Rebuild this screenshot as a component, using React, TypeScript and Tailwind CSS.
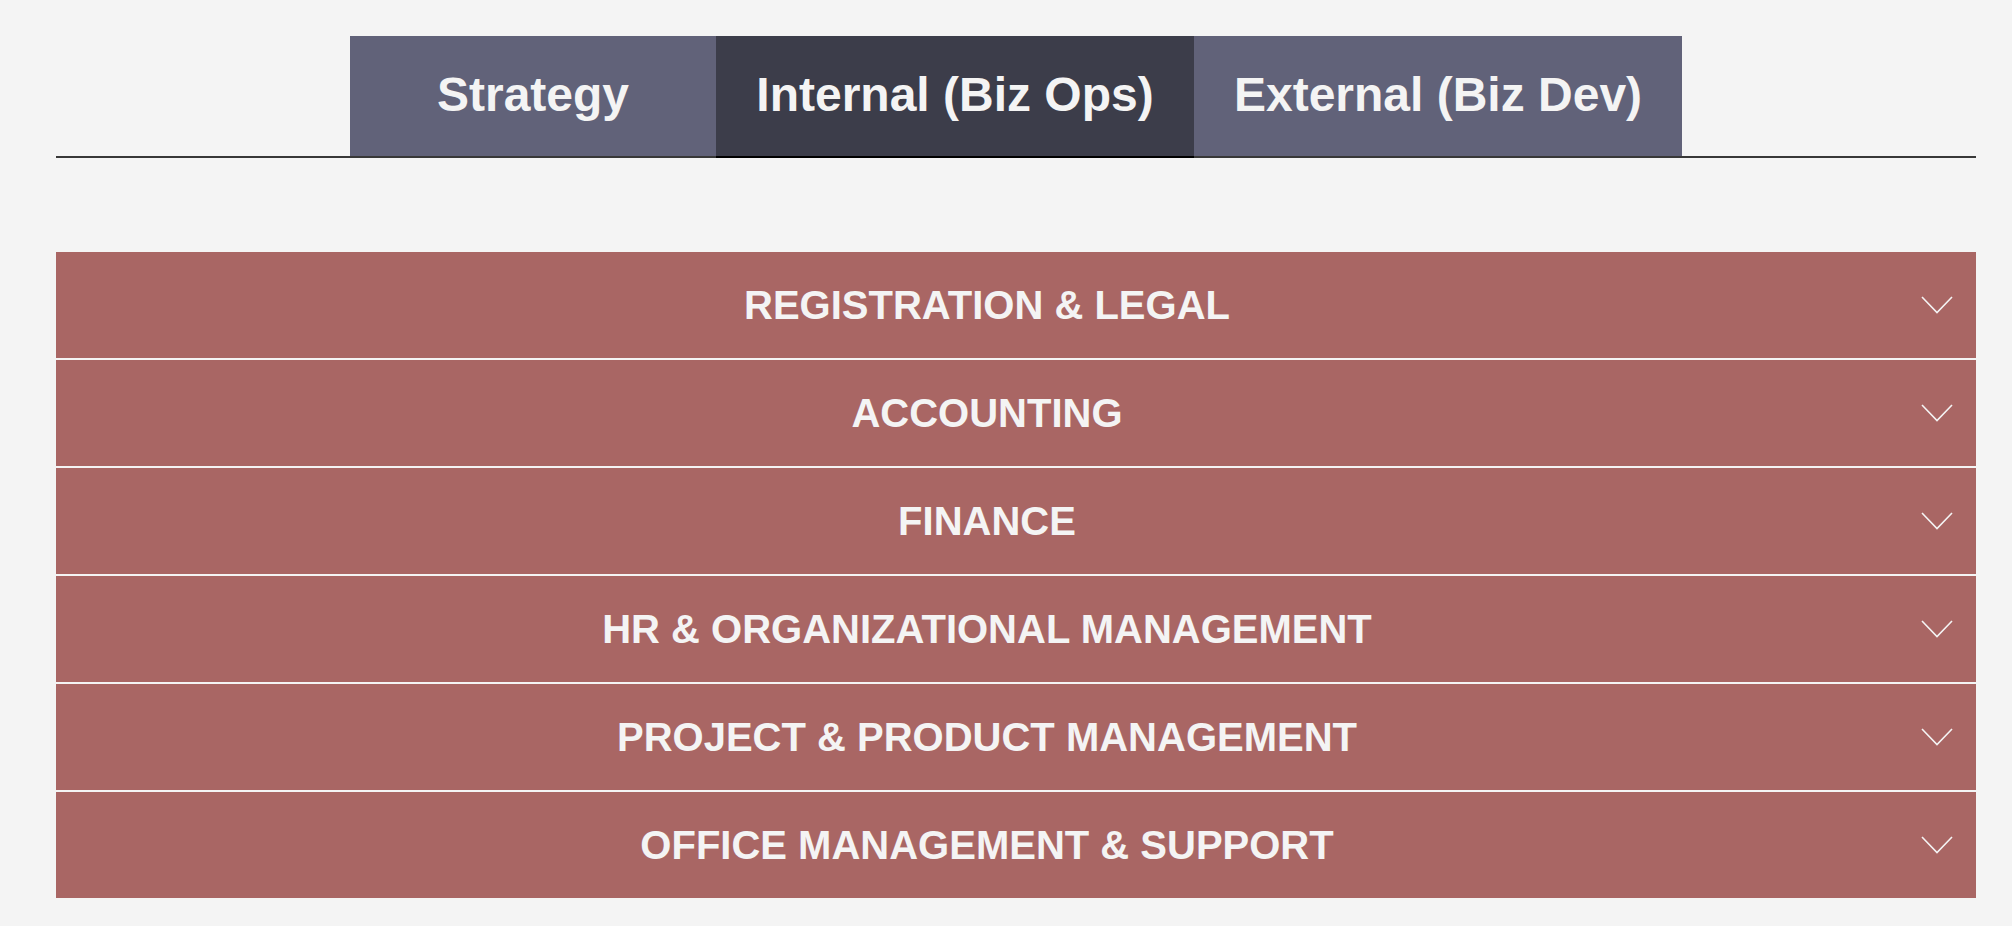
import React from "react";

const tabs = [
  { label: "Strategy", w: "w-[366px]", active: false },
  { label: "Internal (Biz Ops)", w: "w-[478px]", active: true },
  { label: "External (Biz Dev)", w: "w-[488px]", active: false },
];

const rows = [
  "REGISTRATION & LEGAL",
  "ACCOUNTING",
  "FINANCE",
  "HR & ORGANIZATIONAL MANAGEMENT",
  "PROJECT & PRODUCT MANAGEMENT",
  "OFFICE MANAGEMENT & SUPPORT",
];

function Chevron() {
  return (
    <svg width="32" height="18" viewBox="0 0 32 18" fill="none">
      <polyline points="1,1 16,16.5 31,1" stroke="#f4f4f4" strokeWidth="1.6" />
    </svg>
  );
}

export default function App() {
  return (
    <div
      className="min-h-[926px] w-full bg-[#f4f4f4] pt-[36px]"
      style={{ fontFamily: '"Liberation Sans", Arial, sans-serif' }}
    >
      <div className="ml-[56px] w-[1920px]">
        <div className="flex justify-center border-b-2 border-[#383838]">
          {tabs.map((t) => (
            <div
              key={t.label}
              className={`${t.w} -mb-[2px] flex h-[122px] items-center justify-center border-b-2 pb-[2px] text-[48px] font-bold text-[#f4f4f4] ${
                t.active ? "bg-[#3c3d4a] border-black" : "bg-[#616279] border-[#383838]"
              }`}
            >
              {t.label}
            </div>
          ))}
        </div>
        <div className="mt-[94px] flex flex-col gap-[2px]">
          {rows.map((r) => (
            <div key={r} className="flex h-[106px] items-center bg-[#a96664]">
              <div className="flex-1 text-center text-[40px] font-bold text-[#f4f4f4]">{r}</div>
              <div className="flex w-[58px] items-center justify-start pl-[3px]">
                <Chevron />
              </div>
            </div>
          ))}
        </div>
      </div>
    </div>
  );
}
